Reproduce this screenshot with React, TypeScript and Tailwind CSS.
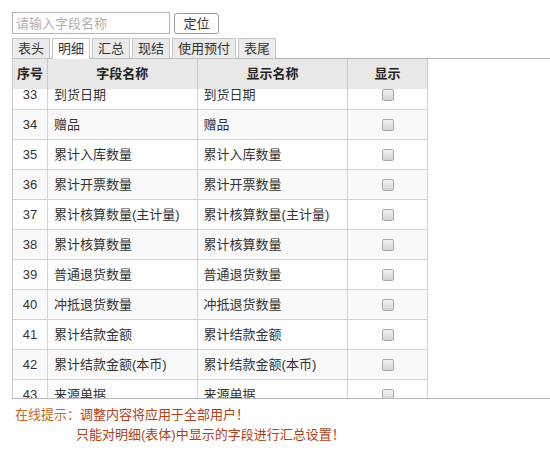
import React from 'react';

const TABS = ['表头', '明细', '汇总', '现结', '使用预付', '表尾'];

const ROWS = [
  { no: 33, field: '到货日期', label: '到货日期' },
  { no: 34, field: '赠品', label: '赠品' },
  { no: 35, field: '累计入库数量', label: '累计入库数量' },
  { no: 36, field: '累计开票数量', label: '累计开票数量' },
  { no: 37, field: '累计核算数量(主计量)', label: '累计核算数量(主计量)' },
  { no: 38, field: '累计核算数量', label: '累计核算数量' },
  { no: 39, field: '普通退货数量', label: '普通退货数量' },
  { no: 40, field: '冲抵退货数量', label: '冲抵退货数量' },
  { no: 41, field: '累计结款金额', label: '累计结款金额' },
  { no: 42, field: '累计结款金额(本币)', label: '累计结款金额(本币)' },
  { no: 43, field: '来源单据', label: '来源单据' },
];

const FONT = "font-['Liberation_Sans','Noto_Sans_CJK_SC',sans-serif]";

const Check = () => (
  <span className="inline-block h-[12px] w-[12px] rounded-[2px] border border-[#a8a8a8] bg-gradient-to-b from-[#f2f2f2] to-[#d4d4d4] align-middle" />
);

export default function App() {
  return (
    <div className={`${FONT} h-[457px] w-[550px] overflow-hidden bg-white pl-[12px] pt-[12px] text-[13px] text-[#333]`}>
      <div className="flex items-center">
        <input
          placeholder="请输入字段名称"
          className="h-[22px] w-[158px] border border-[#b5b5b5] px-[3px] text-[13px] text-[#333] outline-none placeholder:text-[#b0b0b0]"
        />
        <button className="ml-[4px] h-[21px] w-[45px] rounded-[3px] border border-[#9a9a9a] bg-white text-[13px] leading-none text-[#333]">
          定位
        </button>
      </div>

      <div className="mt-[4px] flex gap-[2px] border-b border-[#b0b0b0]">
        {TABS.map((t) => (
          <div
            key={t}
            className={`-mb-px flex h-[21px] items-center border border-[#c4c4c4] px-[5px] leading-none ${
              t === '明细' ? 'border-b-white bg-white' : 'bg-[#ebebeb]'
            }`}
          >
            {t}
          </div>
        ))}
      </div>

      <div className="border-b border-[#b8b8b8]">
        <div className="w-[416px] border-l border-[#c8c8c8]">
          <div className="flex h-[30px] bg-[#e8e8e8] font-bold text-[#222]">
            <div className="flex w-[35px] items-center justify-center border-r border-[#c8c8c8]">序号</div>
            <div className="flex w-[150px] items-center justify-center border-r border-[#c8c8c8]">字段名称</div>
            <div className="flex w-[151px] items-center justify-center border-r border-[#c8c8c8]">显示名称</div>
            <div className="flex w-[80px] items-center justify-center border-r border-[#c8c8c8]">显示</div>
          </div>
          <div className="h-[309px] overflow-hidden">
            <div className="-mt-[9px]">
              {ROWS.map((r) => (
                <div
                  key={r.no}
                  className={`flex h-[30px] border-b border-[#d4d4d4] ${r.no % 2 === 0 ? 'bg-[#f9f9f9]' : 'bg-white'}`}
                >
                  <div className="flex w-[35px] items-center justify-center border-r border-[#d4d4d4]">{r.no}</div>
                  <div className="flex w-[150px] items-center border-r border-[#d4d4d4] pl-[6px]">{r.field}</div>
                  <div className="flex w-[151px] items-center border-r border-[#d4d4d4] pl-[6px]">{r.label}</div>
                  <div className="flex w-[80px] items-center justify-center border-r border-[#d4d4d4]">
                    <Check />
                  </div>
                </div>
              ))}
            </div>
          </div>
        </div>
      </div>

      <div className="mt-[6px] pl-[3px] leading-[20px]">
        <div>
          <span className="text-[#c46a1e]">在线提示：</span>
          <span className="text-[#b0401a]">调整内容将应用于全部用户！</span>
        </div>
        <div className="pl-[61px] text-[#b0401a]">只能对明细(表体)中显示的字段进行汇总设置！</div>
      </div>
    </div>
  );
}
